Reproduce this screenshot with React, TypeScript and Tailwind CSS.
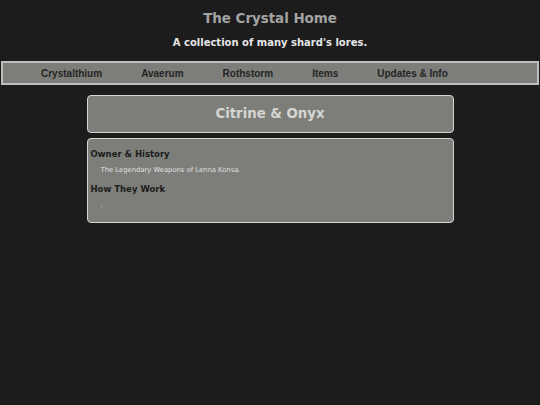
export default function App() {
  const links = ['Crystalthium', 'Avaerum', 'Rothstorm', 'Items', 'Updates & Info'];

  return (
    <div className="min-h-[405px] bg-[#1c1c1c] pt-[10px] font-['DejaVu_Sans',sans-serif]">
      <h1 className="text-center text-[13.4px] font-bold leading-[17px] text-[#a3a3a3]">
        The Crystal Home
      </h1>
      <p className="mt-[9px] text-center text-[10px] font-bold leading-[13px] text-[#e6e6e6]">
        A collection of many shard&apos;s lores.
      </p>

      <nav className="mx-[1px] mt-[12px] border-2 border-[#bdbdbb] bg-[#7d7e7a]">
        <ul className="flex h-[20px] items-center gap-[39px] pl-[38px] font-['Liberation_Sans',Arial,sans-serif] text-[10px] font-bold text-[#242424]">
          {links.map((l) => (
            <li key={l}>{l}</li>
          ))}
        </ul>
      </nav>

      <div className="mx-auto mt-[10px] w-[367px]">
        <div className="flex h-[38px] items-center justify-center rounded-[4px] border-[1.5px] border-[#d4d4d2] bg-[#7d7e7a]">
          <h2 className="text-[13.3px] font-bold text-[#d6d6d4]">Citrine &amp; Onyx</h2>
        </div>

        <div className="mt-[5px] h-[85px] rounded-[4px] border-[1.5px] border-[#d4d4d2] bg-[#7d7e7a] px-[3px] pt-[9px]">
          <h3 className="text-[8.5px] font-bold leading-[12px] text-[#1c1c1c]">Owner &amp; History</h3>
          <p className="mt-[6px] pl-[10px] text-[6.8px] leading-[9px] text-[#e0e0e0]">
            The Legendary Weapons of Lenna Konsa.
          </p>
          <h3 className="mt-[8px] text-[8.5px] font-bold leading-[12px] text-[#1c1c1c]">How They Work</h3>
          <p className="mt-[6px] pl-[10px] text-[6.8px] leading-[9px] text-[#e0e0e0]">.</p>
        </div>
      </div>
    </div>
  );
}
